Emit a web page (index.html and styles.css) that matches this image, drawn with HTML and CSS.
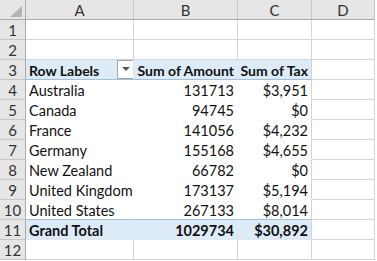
FILE: index.html
```html
<!DOCTYPE html>
<html lang="en">
<head>
    <meta charset="UTF-8" />
    <title>Pivot Table</title>
    <link rel="stylesheet" href="styles.css">
</head>
<body>
    <div class="sheet">
        <!-- column headers -->
        <div class="hd corner">
            <svg width="12" height="11" viewBox="0 0 12 11"><polygon points="12,0 12,11 0,11" fill="#b5b5b5"/></svg>
        </div>
        <div class="hd col">A</div>
        <div class="hd col">B</div>
        <div class="hd col">C</div>
        <div class="hd col">D</div>

        <div class="hd row">1</div>
        <div class="c"></div><div class="c"></div><div class="c"></div><div class="c"></div>

        <div class="hd row">2</div>
        <div class="c"></div><div class="c"></div><div class="c"></div><div class="c"></div>

        <div class="hd row">3</div>
        <div class="c pv head lbl">Row Labels
            <span class="drop"><svg width="8" height="5" viewBox="0 0 8 5"><polygon points="0,0 8,0 4,4" fill="#555"/></svg></span>
        </div>
        <div class="c pv head num">Sum of Amount</div>
        <div class="c pv head num last">Sum of Tax</div>
        <div class="c"></div>

        <div class="hd row">4</div>
        <div class="c pv">Australia</div>
        <div class="c pv num">131713</div>
        <div class="c pv num last">$3,951</div>
        <div class="c"></div>

        <div class="hd row">5</div>
        <div class="c pv">Canada</div>
        <div class="c pv num">94745</div>
        <div class="c pv num last">$0</div>
        <div class="c"></div>

        <div class="hd row">6</div>
        <div class="c pv">France</div>
        <div class="c pv num">141056</div>
        <div class="c pv num last">$4,232</div>
        <div class="c"></div>

        <div class="hd row">7</div>
        <div class="c pv">Germany</div>
        <div class="c pv num">155168</div>
        <div class="c pv num last">$4,655</div>
        <div class="c"></div>

        <div class="hd row">8</div>
        <div class="c pv">New Zealand</div>
        <div class="c pv num">66782</div>
        <div class="c pv num last">$0</div>
        <div class="c"></div>

        <div class="hd row">9</div>
        <div class="c pv">United Kingdom</div>
        <div class="c pv num">173137</div>
        <div class="c pv num last">$5,194</div>
        <div class="c"></div>

        <div class="hd row">10</div>
        <div class="c pv above">United States</div>
        <div class="c pv num above">267133</div>
        <div class="c pv num last above">$8,014</div>
        <div class="c"></div>

        <div class="hd row">11</div>
        <div class="c pv total">Grand Total</div>
        <div class="c pv total num">1029734</div>
        <div class="c pv total num last">$30,892</div>
        <div class="c"></div>

        <div class="hd row">12</div>
        <div class="c"></div><div class="c"></div><div class="c"></div><div class="c"></div>
    </div>
</body>
</html>
```

FILE: styles.css
```css
body {
    margin: 0;
    background: #fff;
    font-family: Lato, "Liberation Sans", sans-serif;
    font-size: 14.5px;
    color: #111;
}

.sheet {
    display: grid;
    grid-template-columns: 26px 108px 104px 74px 63px;
    grid-auto-rows: 20px;
    width: 375px;
}

.sheet > div {
    box-sizing: border-box;
    border-right: 1px solid #d4d4d4;
    border-bottom: 1px solid #d4d4d4;
    display: flex;
    align-items: center;
    white-space: nowrap;
    overflow: hidden;
    padding-top: 1px;
}

.hd {
    background: #e6e6e6;
    color: #333;
    font-size: 15px;
    justify-content: center;
}

.hd.col {
    border-right-color: #c6c6c6;
    border-bottom-color: #ababab;
}

.hd.row {
    border-right-color: #ababab;
    border-bottom-color: #c6c6c6;
}

.corner {
    border-bottom-color: #ababab !important;
    border-right-color: #ababab !important;
    justify-content: flex-end;
    align-items: flex-end !important;
    padding: 0 3px 2px 0;
}

.c {
    padding: 0 3px;
}

/* pivot area: no gridlines inside */
.pv {
    border-right-color: transparent !important;
    border-bottom-color: transparent !important;
}

.pv.last {
    border-right-color: #d4d4d4 !important;
}

.num {
    justify-content: flex-end;
}

.head {
    background: #ddebf7;
    font-weight: bold;
    font-size: 14px;
    border-bottom-color: #9bc2e6 !important;
}

.lbl {
    justify-content: space-between;
    padding-right: 0;
}

.drop {
    box-sizing: border-box;
    width: 17px;
    height: 19px;
    border: 1px solid #a6a6a6;
    background: #fff;
    display: flex;
    align-items: center;
    justify-content: center;
    margin-right: -1px;
    margin-top: -1px;
}

.above {
    border-bottom-color: #9bc2e6 !important;
}

.total {
    background: #ddebf7;
    font-weight: bold;
}
```
